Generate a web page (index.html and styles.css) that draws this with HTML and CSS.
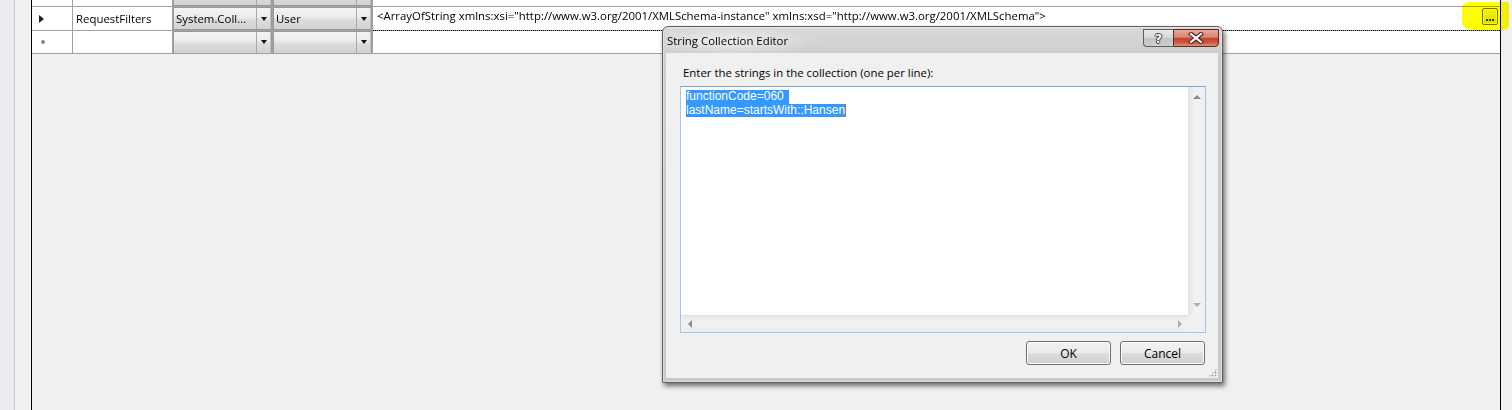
FILE: index.html
```html
<!DOCTYPE html>
<html lang="en">
<head>
<meta charset="utf-8">
<title>String Collection Editor</title>
<link rel="stylesheet" href="styles.css">
</head>
<body>
<div class="screen">
  <div class="side"></div>
  <div class="gutter"></div>
  <div class="grid">
    <div class="row row-top">
      <div class="cell c-head"></div>
      <div class="cell c-name"></div>
      <div class="cell c-type"><div class="combo"><span class="combo-text"></span><span class="combo-btn"><i class="tri-down"></i></span></div></div>
      <div class="cell c-scope"><div class="combo"><span class="combo-text"></span><span class="combo-btn"><i class="tri-down"></i></span></div></div>
      <div class="cell c-value"></div>
    </div>
    <div class="row row-main">
      <div class="cell c-head"><i class="tri-right"></i></div>
      <div class="cell c-name">RequestFilters</div>
      <div class="cell c-type"><div class="combo"><span class="combo-text">System.Coll...</span><span class="combo-btn"><i class="tri-down"></i></span></div></div>
      <div class="cell c-scope"><div class="combo"><span class="combo-text">User</span><span class="combo-btn"><i class="tri-down"></i></span></div></div>
      <div class="cell c-value focus"><span class="value-text">&lt;ArrayOfString xmlns:xsi="http://www.w3.org/2001/XMLSchema-instance" xmlns:xsd="http://www.w3.org/2001/XMLSchema"&gt;</span><span class="ellipsis"><i class="dot"></i><i class="dot"></i><i class="dot"></i></span></div>
    </div>
    <div class="row row-new">
      <div class="cell c-head"><i class="new-dot"></i></div>
      <div class="cell c-name"></div>
      <div class="cell c-type"><div class="combo"><span class="combo-text"></span><span class="combo-btn"><i class="tri-down"></i></span></div></div>
      <div class="cell c-scope"><div class="combo"><span class="combo-text"></span><span class="combo-btn"><i class="tri-down"></i></span></div></div>
      <div class="cell c-value"></div>
    </div>
  </div>
  <div class="right"></div>
  <div class="marker"></div>

  <div class="dialog">
    <div class="titlebar">
      <span class="title">String Collection Editor</span>
      <div class="caption-btns">
        <span class="cap-btn help">?</span>
        <span class="cap-btn close"><svg width="18" height="12" viewBox="0 0 18 12"><path d="M4 2 L14 10 M14 2 L4 10" stroke="#4a1f1a" stroke-width="4.2" stroke-linecap="square"/><path d="M4 2 L14 10 M14 2 L4 10" stroke="#ffffff" stroke-width="2.2" stroke-linecap="square"/></svg></span>
      </div>
    </div>
    <div class="client">
      <div class="prompt">Enter the strings in the collection (one per line):</div>
      <div class="editbox">
        <div class="edit-main">
          <div class="edit-text">
            <div class="line"><span class="sel sel-nl">functionCode=060</span></div>
            <div class="line"><span class="sel">lastName=startsWith::Hansen</span><span class="caret"></span></div>
          </div>
          <div class="vscroll"><i class="arr arr-up"></i><i class="arr arr-down"></i></div>
        </div>
        <div class="hrow">
          <div class="hscroll"><i class="arr arr-left"></i><i class="arr arr-right"></i></div>
          <div class="corner"></div>
        </div>
      </div>
      <div class="actions">
        <span class="btn">OK</span>
        <span class="btn">Cancel</span>
      </div>
      <div class="grip"></div>
    </div>
  </div>
</div>
</body>
</html>
```
FILE: styles.css
```css
* { box-sizing: border-box; }
html, body { margin: 0; padding: 0; }
body {
  background: #f0f0f0;
  font-family: "Open Sans", "Noto Sans", sans-serif;
  font-size: 11.4px;
  color: #000;
  overflow: hidden;
}
.screen {
  position: relative;
  display: flex;
  height: 410px;
  width: 1512px;
}
.side {
  width: 15px;
  background: #ecebf2;
  border-right: 1px solid #c8c7d9;
}
.gutter { width: 16px; background: #f0f0f0; }
.grid {
  width: 1470px;
  border-left: 1px solid #000;
  border-right: 1px solid #000;
  background: #f0f0f0;
  position: relative;
}
.right { flex: 1; background: #f0f0f0; }

.row {
  display: flex;
  border-bottom: 1px solid #a0a0a0;
  background: #fff;
}
.row-top { height: 7px; }
.row-main { height: 24px; }
.row-new { height: 23px; }
.cell {
  display: flex;
  align-items: center;
  border-right: 1px solid #a0a0a0;
  overflow: hidden;
  white-space: nowrap;
}
.row-top .cell { align-items: flex-end; }
.c-head { width: 41px; padding-left: 7px; }
.c-name { width: 100px; padding-left: 3px; }
.c-type, .c-scope { width: 100px; }
.c-value { flex: 1; border-right: 0; padding-left: 4px; padding-right: 2px; position: relative; }
.row-main .c-value { align-items: flex-start; padding-top: 1px; }
.focus { border-bottom: 1px dotted #000; margin-bottom: -1px; }

.tri-right {
  width: 0; height: 0;
  border-top: 4.5px solid transparent;
  border-bottom: 4.5px solid transparent;
  border-left: 5px solid #1e1e1e;
}
.new-dot {
  width: 4px; height: 4px;
  margin-left: 2px;
  border-radius: 50%;
  background: #8a8a8a;
}

.combo {
  flex: 0 0 auto;
  width: 99px;
  height: 23px;
  display: flex;
  border: 1px solid #9a9a9a;
  background: linear-gradient(#f4f4f4 0%, #ebebeb 45%, #dddddd 55%, #d2d2d2 100%);
}
.combo-text { flex: 1; padding-left: 2px; line-height: 21px; overflow: hidden; }
.combo-btn {
  width: 15px;
  border-left: 1px solid #a9a9a9;
  border-right: 1px solid #c4c4c4;
  display: flex;
  align-items: center;
  justify-content: center;
}
.tri-down {
  width: 0; height: 0;
  border-left: 3.5px solid transparent;
  border-right: 3.5px solid transparent;
  border-top: 4px solid #111;
}
.value-text { flex: 1; line-height: 16px; }
.ellipsis {
  width: 16px;
  height: 17px;
  border: 1px solid #707070;
  border-radius: 2px;
  background: linear-gradient(#f4f4f4, #dedede);
  box-shadow: inset 0 0 0 1px #fafafa;
  display: flex;
  align-items: flex-end;
  justify-content: center;
  gap: 1px;
  padding-bottom: 3px;
}
.dot { width: 2px; height: 2px; background: #3a3a3a; }
.marker {
  position: absolute;
  left: 1462px;
  top: 2px;
  width: 47px;
  height: 28px;
  background: #ffff00;
  border-radius: 7px 3px 6px 12px / 7px 3px 4px 8px;
  mix-blend-mode: multiply;
}

/* dialog */
.dialog {
  position: absolute;
  left: 662px;
  top: 26px;
  width: 561px;
  height: 357px;
  border: 1px solid #5e5e5e;
  border-radius: 6px 6px 0 0;
  background: linear-gradient(#d9d9d9, #cdcdcd 30px, #c9c9c9);
  box-shadow: 2px 3px 5px rgba(0, 0, 0, 0.55), inset 0 0 0 1px rgba(255,255,255,0.35);
  padding: 0 4px 4px 3px;
  display: flex;
  flex-direction: column;
}
.titlebar {
  height: 26px;
  display: flex;
  align-items: flex-start;
  background: radial-gradient(ellipse 90px 14px at 64px 14px, rgba(255,255,255,0.6), rgba(255,255,255,0));
}
.title {
  padding-left: 1px;
  line-height: 28px;
  color: #000;
}
.caption-btns { margin-left: auto; display: flex; margin-top: 2px; margin-right: -1px; }
.cap-btn {
  height: 18px;
  display: flex;
  align-items: center;
  justify-content: center;
  border: 1px solid #5d5d5d;
}
.help {
  width: 30px;
  border-right: 0;
  border-radius: 0 0 0 4px;
  background: linear-gradient(#e9e9e9 0%, #d6d6d6 48%, #c2c2c2 52%, #cfcfcf 100%);
  color: #fff;
  font: bold 13px "DejaVu Sans", sans-serif;
  text-shadow: 1px 0 #3a3a3a, -1px 0 #3a3a3a, 0 1px #3a3a3a, 0 -1px #3a3a3a;
}
.close {
  width: 46px;
  border-color: #5a2a24;
  border-radius: 0 0 4px 0;
  background: linear-gradient(#e6a899 0%, #d98672 45%, #c4432f 52%, #cd5a44 80%, #e39078 100%);
}
.client {
  flex: 1;
  background: #f0f0f0;
  position: relative;
  padding: 12px 0 0 14px;
}
.prompt { padding-left: 3px; line-height: 15px; }
.editbox {
  margin-top: 6px;
  width: 526px;
  height: 247px;
  border: 1px solid #a6c4e4;
  border-top-color: #7ea6d4;
  background: #fff;
  display: flex;
  flex-direction: column;
}
.edit-main { flex: 1; display: flex; }
.edit-text {
  flex: 1;
  padding: 3px 0 0 5px;
  font-family: "Liberation Sans", Arial, sans-serif;
  font-size: 12px;
}
.line { height: 13.5px; line-height: 13.5px; display: flex; }
.sel { background: #3399ff; color: #fff; }
.sel-nl { padding-right: 5px; }
.caret { width: 1px; background: #c56a1a; }
.vscroll {
  width: 17px;
  background: linear-gradient(to right, #e6e6e6, #f3f3f3 40%, #efefef);
  border-left: 1px solid #e2e2e2;
  display: flex;
  flex-direction: column;
  justify-content: space-between;
  align-items: center;
  padding: 8px 0 8px;
}
.hrow { height: 17px; display: flex; }
.hscroll {
  flex: 1;
  background: linear-gradient(#e8e8e8, #f3f3f3 40%, #ececec);
  border-top: 1px solid #e2e2e2;
  display: flex;
  justify-content: space-between;
  align-items: center;
  padding: 0 6px 0 7px;
}
.corner { width: 17px; background: #f0f0f0; }
.arr { width: 0; height: 0; display: block; }
.arr-up { border-left: 4px solid transparent; border-right: 4px solid transparent; border-bottom: 4px solid #8c8c8c; }
.arr-down { border-left: 4px solid transparent; border-right: 4px solid transparent; border-top: 4px solid #b0b0b0; }
.arr-left { border-top: 4px solid transparent; border-bottom: 4px solid transparent; border-right: 4px solid #8c8c8c; }
.arr-right { border-top: 4px solid transparent; border-bottom: 4px solid transparent; border-left: 4px solid #b0b0b0; }
.actions {
  display: flex;
  justify-content: flex-end;
  gap: 9px;
  width: 525px;
  margin-top: 8px;
}
.btn {
  width: 85px;
  height: 24px;
  border: 1px solid #707070;
  border-radius: 3px;
  background: linear-gradient(#f2f2f2 0%, #ebebeb 48%, #dddddd 52%, #cfcfcf 100%);
  box-shadow: inset 0 0 0 1px #fbfbfb;
  display: flex;
  align-items: center;
  justify-content: center;
  font-size: 12px;
}
.grip {
  position: absolute;
  right: 1px;
  bottom: 1px;
  width: 9px;
  height: 9px;
  background:
    radial-gradient(circle, #a0a0a0 0.8px, transparent 1.2px) 0 0 / 3px 3px;
  clip-path: polygon(100% 0, 100% 100%, 0 100%);
}
```
